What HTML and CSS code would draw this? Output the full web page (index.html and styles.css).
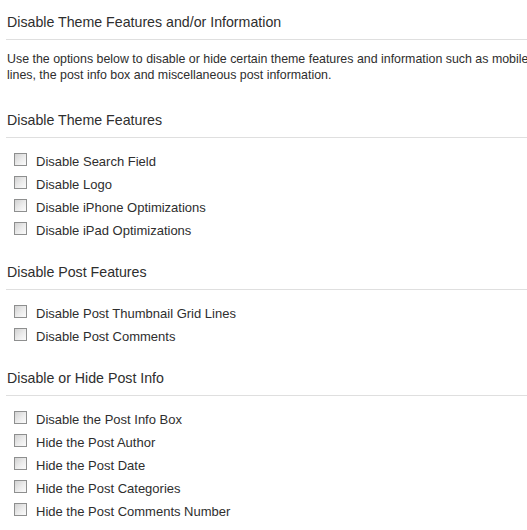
FILE: index.html
```html
<!DOCTYPE html>
<html>
<head>
<meta charset="utf-8">
<link rel="stylesheet" href="styles.css">
</head>
<body>
<div class="page">
  <h3 class="section-title first">Disable Theme Features and/or Information</h3>
  <p class="intro">Use the options below to disable or hide certain theme features and information such as mobile lines, the post info box and miscellaneous post information.</p>

  <h3 class="section-title">Disable Theme Features</h3>
  <ul class="options">
    <li class="option"><span class="box"></span><span class="label">Disable Search Field</span></li>
    <li class="option"><span class="box"></span><span class="label">Disable Logo</span></li>
    <li class="option"><span class="box"></span><span class="label">Disable iPhone Optimizations</span></li>
    <li class="option"><span class="box"></span><span class="label">Disable iPad Optimizations</span></li>
  </ul>

  <h3 class="section-title">Disable Post Features</h3>
  <ul class="options">
    <li class="option"><span class="box"></span><span class="label">Disable Post Thumbnail Grid Lines</span></li>
    <li class="option"><span class="box"></span><span class="label">Disable Post Comments</span></li>
  </ul>

  <h3 class="section-title">Disable or Hide Post Info</h3>
  <ul class="options">
    <li class="option"><span class="box"></span><span class="label">Disable the Post Info Box</span></li>
    <li class="option"><span class="box"></span><span class="label">Hide the Post Author</span></li>
    <li class="option"><span class="box"></span><span class="label">Hide the Post Date</span></li>
    <li class="option"><span class="box"></span><span class="label">Hide the Post Categories</span></li>
    <li class="option"><span class="box"></span><span class="label">Hide the Post Comments Number</span></li>
  </ul>
</div>
</body>
</html>
```
FILE: styles.css
```css
html, body {
  margin: 0;
  padding: 0;
  background: #fff;
  overflow: hidden;
}
body {
  font-family: "Liberation Sans", Arial, sans-serif;
  color: #2e2e2e;
}
.page {
  width: 540px;
  padding-left: 6px;
}
.section-title {
  margin: 20px 0 0 0;
  padding: 0 0 7px 1px;
  font-size: 14.2px;
  line-height: 20px;
  font-weight: normal;
  color: #2e2e2e;
  border-bottom: 1px solid #dfdfdf;
}
.section-title.first {
  margin-top: 12px;
}
.intro {
  margin: 11px 0 27px 0;
  padding-left: 1px;
  font-size: 12.4px;
  line-height: 16px;
}
.options {
  list-style: none;
  margin: 0;
  padding: 12px 0 0 8px;
}
.option {
  display: flex;
  align-items: center;
  height: 23px;
}
.box {
  width: 11px;
  height: 11px;
  border: 1px solid #8e8f8f;
  background: linear-gradient(135deg, #d2d2d2 0%, #ececec 55%, #fbfbfb 100%);
  margin-right: 9px;
  margin-top: -5px;
  flex: none;
}
.label {
  font-size: 13px;
  line-height: 23px;
}
```
